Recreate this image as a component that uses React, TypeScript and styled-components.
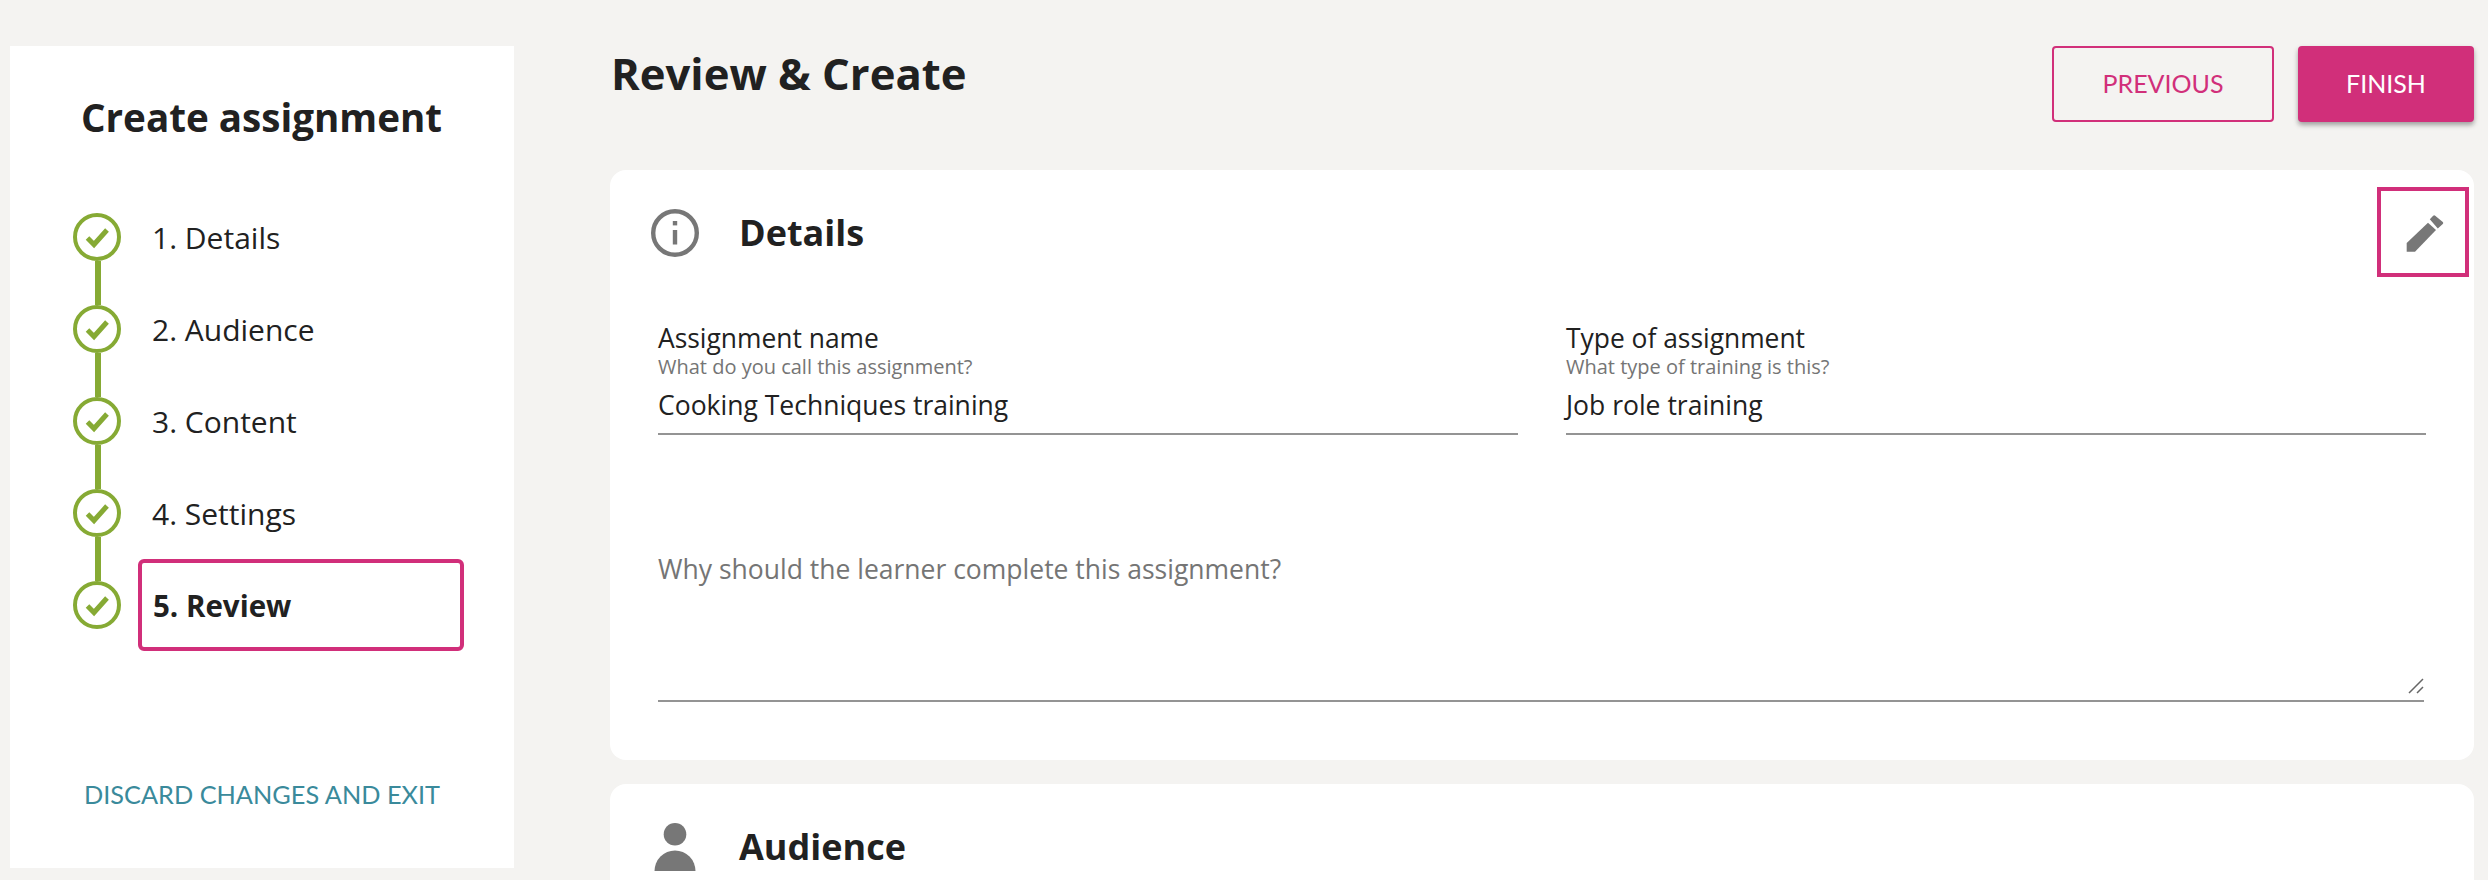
import React from "react";
import styled, { createGlobalStyle } from "styled-components";

const Global = createGlobalStyle`
  html, body { margin: 0; padding: 0; height: 880px; overflow: hidden; background: #f4f3f1; }
  body { font-family: "Open Sans", Lato, sans-serif; color: #212121; }
  * { box-sizing: border-box; }
`;

const Page = styled.div`
  display: flex;
  align-items: flex-start;
  height: 880px;
  padding-left: 10px;
  overflow: hidden;
`;

const Sidebar = styled.aside`
  width: 504px;
  height: 822px;
  margin-top: 46px;
  background: #fff;
  display: flex;
  flex-direction: column;
`;

const SidebarTitle = styled.h2`
  margin: 47px 0 0;
  padding-left: 71px;
  height: 98px;
  font-size: 38.6px;
  line-height: 48px;
  font-weight: 700;
  white-space: nowrap;
`;

const Steps = styled.ol`
  list-style: none;
  margin: 0;
  padding: 0 0 0 63px;
  flex: 1;
`;

const Step = styled.li`
  display: flex;
  height: 92px;
`;

const Indicator = styled.div`
  width: 48px;
  display: flex;
  flex-direction: column;
  margin-right: 17px;
`;

const Segment = styled.span<{ $hidden?: boolean }>`
  flex: 1;
  width: 6px;
  margin-left: 22px;
  background: #86aa34;
  visibility: ${(p) => (p.$hidden ? "hidden" : "visible")};
`;

const StepLabel = styled.div<{ $active?: boolean }>`
  width: 326px;
  height: 92px;
  display: flex;
  align-items: center;
  padding-left: ${(p) => (p.$active ? 11 : 10)}px;
  border: 4px solid ${(p) => (p.$active ? "#d12f7a" : "transparent")};
  border-radius: 6px;
  font-size: ${(p) => (p.$active ? 29.5 : 30)}px;
  font-weight: ${(p) => (p.$active ? 700 : 400)};
`;

const DiscardLink = styled.a`
  display: block;
  margin-bottom: 59px;
  text-align: center;
  font-family: Lato, sans-serif;
  font-size: 25.3px;
  line-height: 30px;
  color: #3a8a9b;
  white-space: nowrap;
`;

const Main = styled.main`
  width: 1864px;
  margin-left: 96px;
  display: flex;
  flex-direction: column;
`;

const Header = styled.header`
  height: 170px;
  display: flex;
  justify-content: space-between;
  align-items: flex-start;
`;

const PageTitle = styled.h1`
  margin: 45px 0 0 1px;
  font-size: 43.6px;
  line-height: 56px;
  font-weight: 700;
`;

const Actions = styled.div`
  display: flex;
  gap: 24px;
  margin-top: 46px;
`;

const Button = styled.button<{ $primary?: boolean }>`
  height: 76px;
  width: ${(p) => (p.$primary ? 176 : 222)}px;
  border-radius: 4px;
  border: 2px solid #d12f7a;
  background: ${(p) => (p.$primary ? "#d12f7a" : "transparent")};
  color: ${(p) => (p.$primary ? "#fff" : "#d12f7a")};
  box-shadow: ${(p) => (p.$primary ? "0 3px 5px rgba(0,0,0,.35)" : "none")};
  font-family: Lato, sans-serif;
  font-size: 25px;
  padding: 0 0 2px;
`;

const Card = styled.section`
  background: #fff;
  border-radius: 16px;
  padding: 0 48px;
  flex-shrink: 0;
`;

const DetailsCard = styled(Card)`
  height: 590px;
  margin-bottom: 24px;
`;

const AudienceCard = styled(Card)`
  height: 200px;
`;

const CardHead = styled.div`
  display: flex;
  align-items: center;
  margin: 0 0 0 -7px;
  padding-top: 39px;
  position: relative;
`;

const HeadIcon = styled.span`
  width: 48px;
  height: 48px;
  margin-right: 40px;
  color: #777;
  display: flex;
`;

const CardTitle = styled.h3`
  margin: 0;
  font-size: 36px;
  line-height: 48px;
  font-weight: 700;
`;

const EditButton = styled.button`
  position: absolute;
  top: 17px;
  right: -43px;
  width: 92px;
  height: 90px;
  border: 4px solid #d12f7a;
  background: #fff;
  padding: 0;
  display: flex;
  align-items: center;
  justify-content: center;
  color: #777;
`;

const FieldGrid = styled.div`
  display: grid;
  grid-template-columns: 860px 860px;
  column-gap: 48px;
  margin-top: 63px;
`;

const Field = styled.div`
  display: flex;
  flex-direction: column;
  border-bottom: 2px solid #949494;
  height: 115px;
`;

const FieldLabel = styled.label`
  font-size: 26.4px;
  line-height: 36px;
`;

const FieldHint = styled.span`
  font-size: 20px;
  line-height: 22px;
  color: #757575;
`;

const FieldValue = styled.div`
  font-size: 26.5px;
  line-height: 34px;
  margin-top: 10px;
`;

const TextArea = styled.div`
  position: relative;
  margin-top: 117px;
  height: 150px;
  width: 1766px;
  border-bottom: 2px solid #949494;
  font-size: 26.5px;
  line-height: 34px;
  color: #757575;
`;

const Grip = styled.svg`
  position: absolute;
  right: 0;
  bottom: 6px;
`;

const Check = () => (
  <svg width="48" height="48" viewBox="0 0 48 48" fill="none">
    <circle cx="24" cy="24" r="22" stroke="#86aa34" strokeWidth="4" />
    <path d="M14.5 25 21 31.5 34 17" stroke="#86aa34" strokeWidth="5" />
  </svg>
);

const InfoIcon = () => (
  <svg width="48" height="48" viewBox="0 0 48 48" fill="none">
    <circle cx="24" cy="24" r="21.8" stroke="currentColor" strokeWidth="4.4" />
    <rect x="21.8" y="12" width="4.4" height="4.4" fill="currentColor" />
    <rect x="21.8" y="21" width="4.4" height="14.5" fill="currentColor" />
  </svg>
);

const PersonIcon = () => (
  <svg width="48" height="48" viewBox="0 0 48 48" fill="currentColor">
    <circle cx="24" cy="11.3" r="11.3" />
    <path d="M3.5 48A20.5 20.5 0 0 1 44.5 48Z" />
  </svg>
);

const PencilIcon = () => (
  <svg width="50" height="50" viewBox="-2 -3 50 50" fill="currentColor">
    <path d="M6.7 33 28 12.7 36 20 15 41.7H6.7Z" />
    <path d="M29.8 9.2 33.2 5.8a1.4 1.4 0 0 1 2 0L42.8 12a1.4 1.4 0 0 1 0 2L37.8 18.4Z" />
  </svg>
);

const steps = ["1. Details", "2. Audience", "3. Content", "4. Settings", "5. Review"];

export default function App() {
  return (
    <>
      <Global />
      <Page>
        <Sidebar>
          <SidebarTitle>Create assignment</SidebarTitle>
          <Steps>
            {steps.map((s, i) => (
              <Step key={s}>
                <Indicator>
                  <Segment $hidden={i === 0} />
                  <Check />
                  <Segment $hidden={i === steps.length - 1} />
                </Indicator>
                <StepLabel $active={i === steps.length - 1}>{s}</StepLabel>
              </Step>
            ))}
          </Steps>
          <DiscardLink>DISCARD CHANGES AND EXIT</DiscardLink>
        </Sidebar>
        <Main>
          <Header>
            <PageTitle>Review &amp; Create</PageTitle>
            <Actions>
              <Button>PREVIOUS</Button>
              <Button $primary>FINISH</Button>
            </Actions>
          </Header>
          <DetailsCard>
            <CardHead>
              <HeadIcon><InfoIcon /></HeadIcon>
              <CardTitle>Details</CardTitle>
              <EditButton aria-label="Edit"><PencilIcon /></EditButton>
            </CardHead>
            <FieldGrid>
              <Field>
                <FieldLabel>Assignment name</FieldLabel>
                <FieldHint>What do you call this assignment?</FieldHint>
                <FieldValue>Cooking Techniques training</FieldValue>
              </Field>
              <Field>
                <FieldLabel>Type of assignment</FieldLabel>
                <FieldHint>What type of training is this?</FieldHint>
                <FieldValue>Job role training</FieldValue>
              </Field>
            </FieldGrid>
            <TextArea>
              Why should the learner complete this assignment?
              <Grip width="16" height="16" viewBox="0 0 16 16" fill="none" stroke="#666" strokeWidth="1.5">
                <path d="M1 15 15 1M9 15 15 9" />
              </Grip>
            </TextArea>
          </DetailsCard>
          <AudienceCard>
            <CardHead>
              <HeadIcon><PersonIcon /></HeadIcon>
              <CardTitle>Audience</CardTitle>
            </CardHead>
          </AudienceCard>
        </Main>
      </Page>
    </>
  );
}
